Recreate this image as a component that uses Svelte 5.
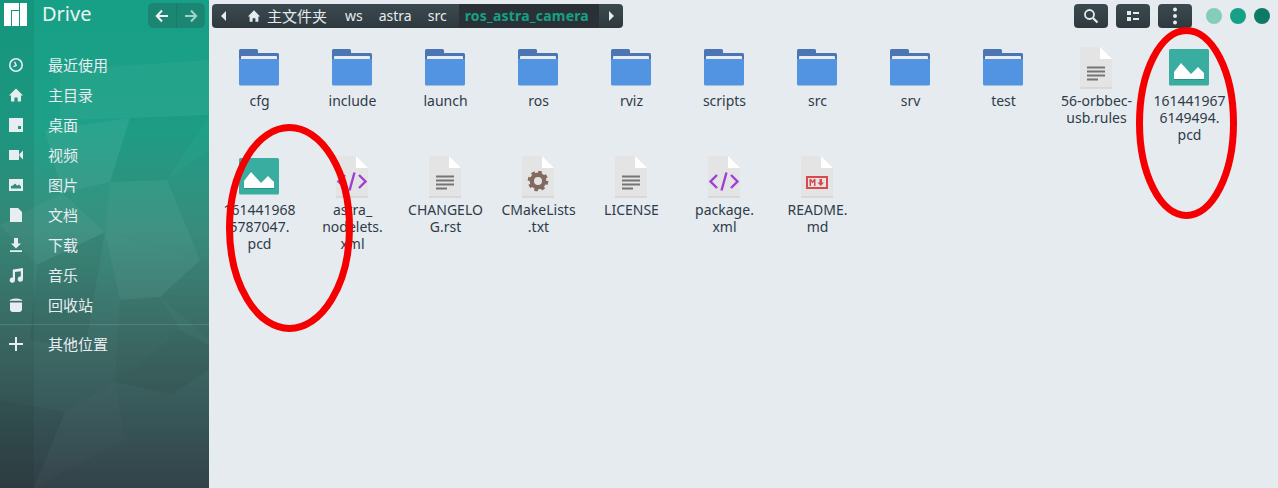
<script lang="ts">
	const places = [
		{ name: '最近使用', icon: 'clock' },
		{ name: '主目录', icon: 'home' },
		{ name: '桌面', icon: 'desktop' },
		{ name: '视频', icon: 'video' },
		{ name: '图片', icon: 'image' },
		{ name: '文档', icon: 'doc' },
		{ name: '下载', icon: 'download' },
		{ name: '音乐', icon: 'music' },
		{ name: '回收站', icon: 'trash' }
	];

	const files = [
		{ lines: ['cfg'], type: 'folder' },
		{ lines: ['include'], type: 'folder' },
		{ lines: ['launch'], type: 'folder' },
		{ lines: ['ros'], type: 'folder' },
		{ lines: ['rviz'], type: 'folder' },
		{ lines: ['scripts'], type: 'folder' },
		{ lines: ['src'], type: 'folder' },
		{ lines: ['srv'], type: 'folder' },
		{ lines: ['test'], type: 'folder' },
		{ lines: ['56-orbbec-', 'usb.rules'], type: 'text' },
		{ lines: ['161441967', '6149494.', 'pcd'], type: 'image' },
		{ lines: ['161441968', '5787047.', 'pcd'], type: 'image' },
		{ lines: ['astra_', 'nodelets.', 'xml'], type: 'xml' },
		{ lines: ['CHANGELO', 'G.rst'], type: 'text' },
		{ lines: ['CMakeLists', '.txt'], type: 'cmake' },
		{ lines: ['LICENSE'], type: 'text' },
		{ lines: ['package.', 'xml'], type: 'xml' },
		{ lines: ['README.', 'md'], type: 'md' }
	];

	// low-poly wallpaper facets behind the sidebar
	const facets = [
		{ p: '60,70 209,60 209,115 130,118 60,120', f: '#fff', o: 0.04 },
		{ p: '130,118 209,115 167,180 110,182', f: '#000', o: 0.025 },
		{ p: '62,193 110,182 130,118 45,130', f: '#fff', o: 0.05 },
		{ p: '110,182 167,180 200,260 105,232', f: '#fff', o: 0.03 },
		{ p: '167,180 209,150 209,262 200,260', f: '#000', o: 0.02 },
		{ p: '62,193 105,232 37,265 0,225', f: '#fff', o: 0.04 },
		{ p: '105,232 200,260 160,297 120,300', f: '#fff', o: 0.04 },
		{ p: '37,265 105,232 85,350 30,340', f: '#000', o: 0.05 },
		{ p: '120,300 160,297 180,330 115,382', f: '#000', o: 0.03 },
		{ p: '200,260 209,262 209,340 160,297', f: '#000', o: 0.03 },
		{ p: '115,382 172,394 209,370 209,345 180,330', f: '#000', o: 0.05 },
		{ p: '65,412 115,382 125,440 34,488', f: '#fff', o: 0.015 },
		{ p: '0,400 65,412 34,488 0,488', f: '#000', o: 0.04 }
	];
</script>

{#snippet placeIcon(icon)}
	<svg class="place-icon" width="16" height="16" viewBox="0 0 16 16" fill="currentColor">
		{#if icon === 'clock'}
			<circle cx="8" cy="8" r="6.2" fill="none" stroke="currentColor" stroke-width="1.6" />
			<path d="M8 4.5V8.5H5" transform="rotate(-25 8 8)" fill="none" stroke="currentColor" stroke-width="1.4" />
		{:else if icon === 'home'}
			<path d="M8 1.5L15 8.5H13V14.5H9.6V10.5H6.4V14.5H3V8.5H1Z" />
		{:else if icon === 'desktop'}
			<path d="M1 1H15V15H1ZM10 9V12H13V9Z" fill-rule="evenodd" />
		{:else if icon === 'video'}
			<path d="M1 3H11V13H1ZM11.5 7L15 3.5V12.5L11.5 9Z" />
		{:else if icon === 'image'}
			<path d="M1 2H15V14H1ZM3 11.5H13L13 9.5L11 7.5L9.2 8.8L7 6.5L5 8.5L3 9Z" fill-rule="evenodd" />
		{:else if icon === 'doc'}
			<path d="M2 1H10L14 5V15H2Z" />
		{:else if icon === 'download'}
			<path d="M6 1H10V6.5H13L8 11.5L3 6.5H6ZM2 13.2H14V15H2Z" />
		{:else if icon === 'music'}
			<path d="M5 2.5L15 1V12H14.9A2.6 2.6 0 1 1 12.8 9.6V4.2L7 5V13H6.9A2.6 2.6 0 1 1 4.8 10.6V3Z" />
		{:else if icon === 'trash'}
			<path d="M2 5.5H14V12A3 3 0 0 1 11 15H5A3 3 0 0 1 2 12ZM1.5 3.8A6.5 2.2 0 0 1 14.5 3.8Z" />
		{:else}
			<path d="M7 1H9V7H15V9H9V15H7V9H1V7H7Z" />
		{/if}
	</svg>
{/snippet}

{#snippet fileIcon(type)}
	{#if type === 'folder'}
		<svg width="40" height="38" viewBox="0 0 40 38">
			<path d="M0 1.5A1.5 1.5 0 0 1 1.5 0H17.5A1.5 1.5 0 0 1 19 1.5V4H38.5A1.5 1.5 0 0 1 40 5.5V20H0Z" fill="#4b76b3" />
			<rect x="2" y="7" width="36" height="6" rx="1" fill="#e9ebef" />
			<path d="M0 10H40V35A1.5 1.5 0 0 1 38.5 36.5H1.5A1.5 1.5 0 0 1 0 35Z" fill="#5294e2" />
		</svg>
	{:else if type === 'image'}
		<svg width="40" height="38" viewBox="0 0 40 38">
			<rect width="40" height="36.5" rx="1.5" fill="#38ada0" />
			<path d="M5 23L12 14L22 25L29 18L35 24V30H5Z" fill="#fff" />
			<rect x="5" y="30" width="30" height="1" fill="#2a8f83" />
		</svg>
	{:else}
		<svg width="40" height="42" viewBox="0 0 40 42">
			<path d="M4 0H24L36 12V41H4Z" fill="#e4e4e4" />
			<rect x="4" y="40.5" width="32" height="1" fill="#c9c9c9" />
			<path d="M24 0L36 12H24Z" fill="#fff" />
			{#if type === 'text'}
				<path d="M11 19.5H29V21.5H11ZM11 23.5H29V25.5H11ZM11 27.5H29V29.5H11ZM11 31.5H22V33.5H11Z" fill="#757575" />
			{:else if type === 'xml'}
				<g fill="none" stroke="#9c3fd6" stroke-width="2.4">
					<path d="M13 19L6.5 25.5L13 32" />
					<path d="M27 19L33.5 25.5L27 32" />
					<path d="M22.5 16.5L17.5 34.5" />
				</g>
			{:else if type === 'cmake'}
				<circle cx="20" cy="25" r="6.2" fill="none" stroke="#836a60" stroke-width="4.4" />
				<circle cx="20" cy="25" r="9" fill="none" stroke="#836a60" stroke-width="2.6" stroke-dasharray="3.6 3.47" />
			{:else}
				<rect x="9" y="20" width="22" height="13" fill="#d9474f" />
				<rect x="11" y="22" width="18" height="9" fill="#e4e4e4" />
				<path d="M12.5 30V23H14L15.5 25L17 23H18.5V30H17V25.5L15.5 27.5L14 25.5V30ZM22.5 23H25V26.5H27L23.8 30L20.5 26.5H22.5Z" fill="#d9474f" />
			{/if}
		</svg>
	{/if}
{/snippet}

<div class="window">
	<aside class="sidebar">
		<svg class="wallpaper" width="209" height="488" viewBox="0 0 209 488">
			{#each facets as facet}
				<polygon points={facet.p} fill={facet.f} opacity={facet.o} />
			{/each}
		</svg>
		<div class="strip"></div>

		<div class="side-head">
			<svg class="logo" width="23" height="23" viewBox="0 0 23 23" fill="#fff">
				<path d="M0 0H15V7H7V23H0ZM8 8H15V23H8ZM16 0H23V23H16Z" />
			</svg>
			<span class="title">Drive</span>
			<div class="nav-group">
				<button class="nav-btn" aria-label="Back">
					<svg width="14" height="14" viewBox="0 0 14 14" fill="none" stroke="currentColor" stroke-width="2"><path d="M13 7H2M7 1.5L1.8 7L7 12.5" /></svg>
				</button>
				<button class="nav-btn dim" aria-label="Forward">
					<svg width="14" height="14" viewBox="0 0 14 14" fill="none" stroke="currentColor" stroke-width="2"><path d="M1 7H12M7 1.5L12.2 7L7 12.5" /></svg>
				</button>
			</div>
		</div>

		<nav class="places">
			{#each places as place}
				<div class="place">
					{@render placeIcon(place.icon)}
					<span>{place.name}</span>
				</div>
			{/each}
			<div class="separator"></div>
			<div class="place">
				{@render placeIcon('plus')}
				<span>其他位置</span>
			</div>
		</nav>
	</aside>

	<main class="main">
		<header class="toolbar">
			<div class="pathbar">
				<button class="arrow" aria-label="Scroll left">
					<svg width="8" height="10" viewBox="0 0 8 10" fill="currentColor"><path d="M6 0V10L1 5Z" /></svg>
				</button>
				<div class="crumb home">
					<svg width="14" height="14" viewBox="0 0 16 16" fill="currentColor"><path d="M8 1.5L15 8.5H13V14.5H9.6V10.5H6.4V14.5H3V8.5H1Z" /></svg>
					<span>主文件夹</span>
				</div>
				<div class="crumb">ws</div>
				<div class="crumb">astra</div>
				<div class="crumb src">src</div>
				<div class="crumb active">ros_astra_camera</div>
				<button class="arrow right" aria-label="Scroll right">
					<svg width="8" height="10" viewBox="0 0 8 10" fill="currentColor"><path d="M2 0V10L7 5Z" /></svg>
				</button>
			</div>

			<div class="tools">
				<button class="tool" aria-label="Search">
					<svg width="16" height="16" viewBox="0 0 16 16" fill="none" stroke="currentColor" stroke-width="1.8"><circle cx="6.5" cy="6.5" r="4.5" /><path d="M10 10L14.5 14.5" stroke-width="2.2" /></svg>
				</button>
				<button class="tool" aria-label="View">
					<svg width="16" height="16" viewBox="0 0 16 16" fill="currentColor"><path d="M2 3H6V7H2ZM8 4H14V6H8ZM2 9H6V13H2ZM8 10H14V12H8Z" /></svg>
				</button>
				<button class="tool" aria-label="Menu">
					<svg width="16" height="18" viewBox="0 0 16 18" fill="currentColor"><circle cx="8" cy="2.5" r="2" /><circle cx="8" cy="9" r="2" /><circle cx="8" cy="15.5" r="2" /></svg>
				</button>
			</div>

			<div class="window-dots">
				<span class="dot min"></span>
				<span class="dot max"></span>
				<span class="dot close"></span>
			</div>
		</header>

		<section class="grid">
			{#each files as file}
				<div class="file">
					<div class="file-icon">{@render fileIcon(file.type)}</div>
					<div class="file-name">
						{#each file.lines as line}
							<div>{line}</div>
						{/each}
					</div>
				</div>
			{/each}
		</section>
	</main>

	<!-- hand-drawn annotations on top of the screenshot -->
	<svg class="marks" width="1278" height="488" viewBox="0 0 1278 488" fill="none" stroke="#f50000" stroke-width="7">
		<ellipse cx="1186.5" cy="123" rx="47" ry="92.5" />
		<ellipse cx="289.5" cy="228" rx="60" ry="100.5" />
	</svg>
</div>

<style>
	:global(body) { margin: 0; background: #e6ebf0; }
	.window { position: relative; display: flex; width: 1278px; height: 488px; overflow: hidden; font-family: 'Noto Sans', 'Noto Sans CJK SC', sans-serif; font-size: 14px; color: #2f3b49; }
	button { border: none; padding: 0; font: inherit; color: inherit; background: none; display: flex; align-items: center; justify-content: center; }

	.sidebar { position: relative; width: 209px; flex-shrink: 0; background: linear-gradient(180deg, #16a085 0px, #1fa088 130px, #3a8f7f 230px, #3d6c67 340px, #334249 488px); color: #e8edf1; }
	.wallpaper { position: absolute; left: 0; top: 0; }
	.strip { position: absolute; left: 0; top: 0; bottom: 0; width: 34px; background: rgba(0, 0, 0, 0.06); }
	.side-head { position: relative; display: flex; align-items: center; height: 30px; padding: 1px 4px 0 4px; box-sizing: border-box; }
	.logo { flex-shrink: 0; margin-top: -2px; }
	.title { margin-left: 15px; font-size: 20px; line-height: 26px; color: #eef3f4; position: relative; top: -2px; }
	.nav-group { display: flex; margin-left: auto; height: 25px; border-radius: 5px; overflow: hidden; background: rgba(40, 70, 70, 0.28); }
	.nav-btn { width: 28px; height: 25px; color: #eef3f4; }
	.nav-btn.dim { color: #9ed3c8; border-left: 1px solid rgba(0, 0, 0, 0.08); width: 29px; }

	.places { position: relative; padding-top: 19px; }
	.place { display: flex; align-items: center; height: 30px; padding-left: 8px; font-size: 15px; }
	.place-icon { flex-shrink: 0; margin-top: 2px; }
	.place span { margin-left: 24px; }
	.separator { height: 1px; margin: 5px 0 3px; background: rgba(255, 255, 255, 0.13); }

	.main { flex: 1; min-width: 0; }
	.toolbar { display: flex; align-items: flex-start; padding: 4px 8px 0 3px; height: 44px; box-sizing: border-box; }
	.pathbar { display: flex; align-items: stretch; height: 24px; border-radius: 4px; overflow: hidden; background: linear-gradient(180deg, #3b4a50, #2e393e); color: #e6ebef; }
	.arrow { width: 23px; }
	.arrow.right { width: 24px; }
	.crumb { display: flex; align-items: center; padding: 0 8px; line-height: 24px; }
	.crumb.home { gap: 6px; padding: 0 10px 0 12px; }
	.crumb.home span { font-size: 15px; }
	.crumb.src { padding-right: 12px; }
	.crumb.active { padding: 0 10px 0 6px; font-weight: 700; letter-spacing: 0.2px; color: #16a085; background: #2a3136; }
	.tools { display: flex; gap: 8px; margin-left: auto; }
	.tool { width: 34px; height: 24px; border-radius: 4px; background: linear-gradient(180deg, #3b4a50, #2e393e); color: #e6ebef; }
	.window-dots { display: flex; gap: 8px; margin: 4px 0 0 14px; }
	.dot { width: 16px; height: 16px; border-radius: 50%; }
	.dot.min { background: #84cdbb; }
	.dot.max { background: #16a085; }
	.dot.close { background: #0f7a63; }

	.grid { display: grid; grid-template-columns: repeat(11, 93px); grid-auto-rows: 109px; padding-left: 3px; }
	.file { display: flex; flex-direction: column; align-items: center; }
	.file-icon { display: flex; align-items: center; justify-content: center; height: 48px; }
	.file-name { padding-left: 2px; text-align: center; line-height: 17px; white-space: nowrap; }

	.marks { position: absolute; left: 0; top: 0; pointer-events: none; }
</style>
